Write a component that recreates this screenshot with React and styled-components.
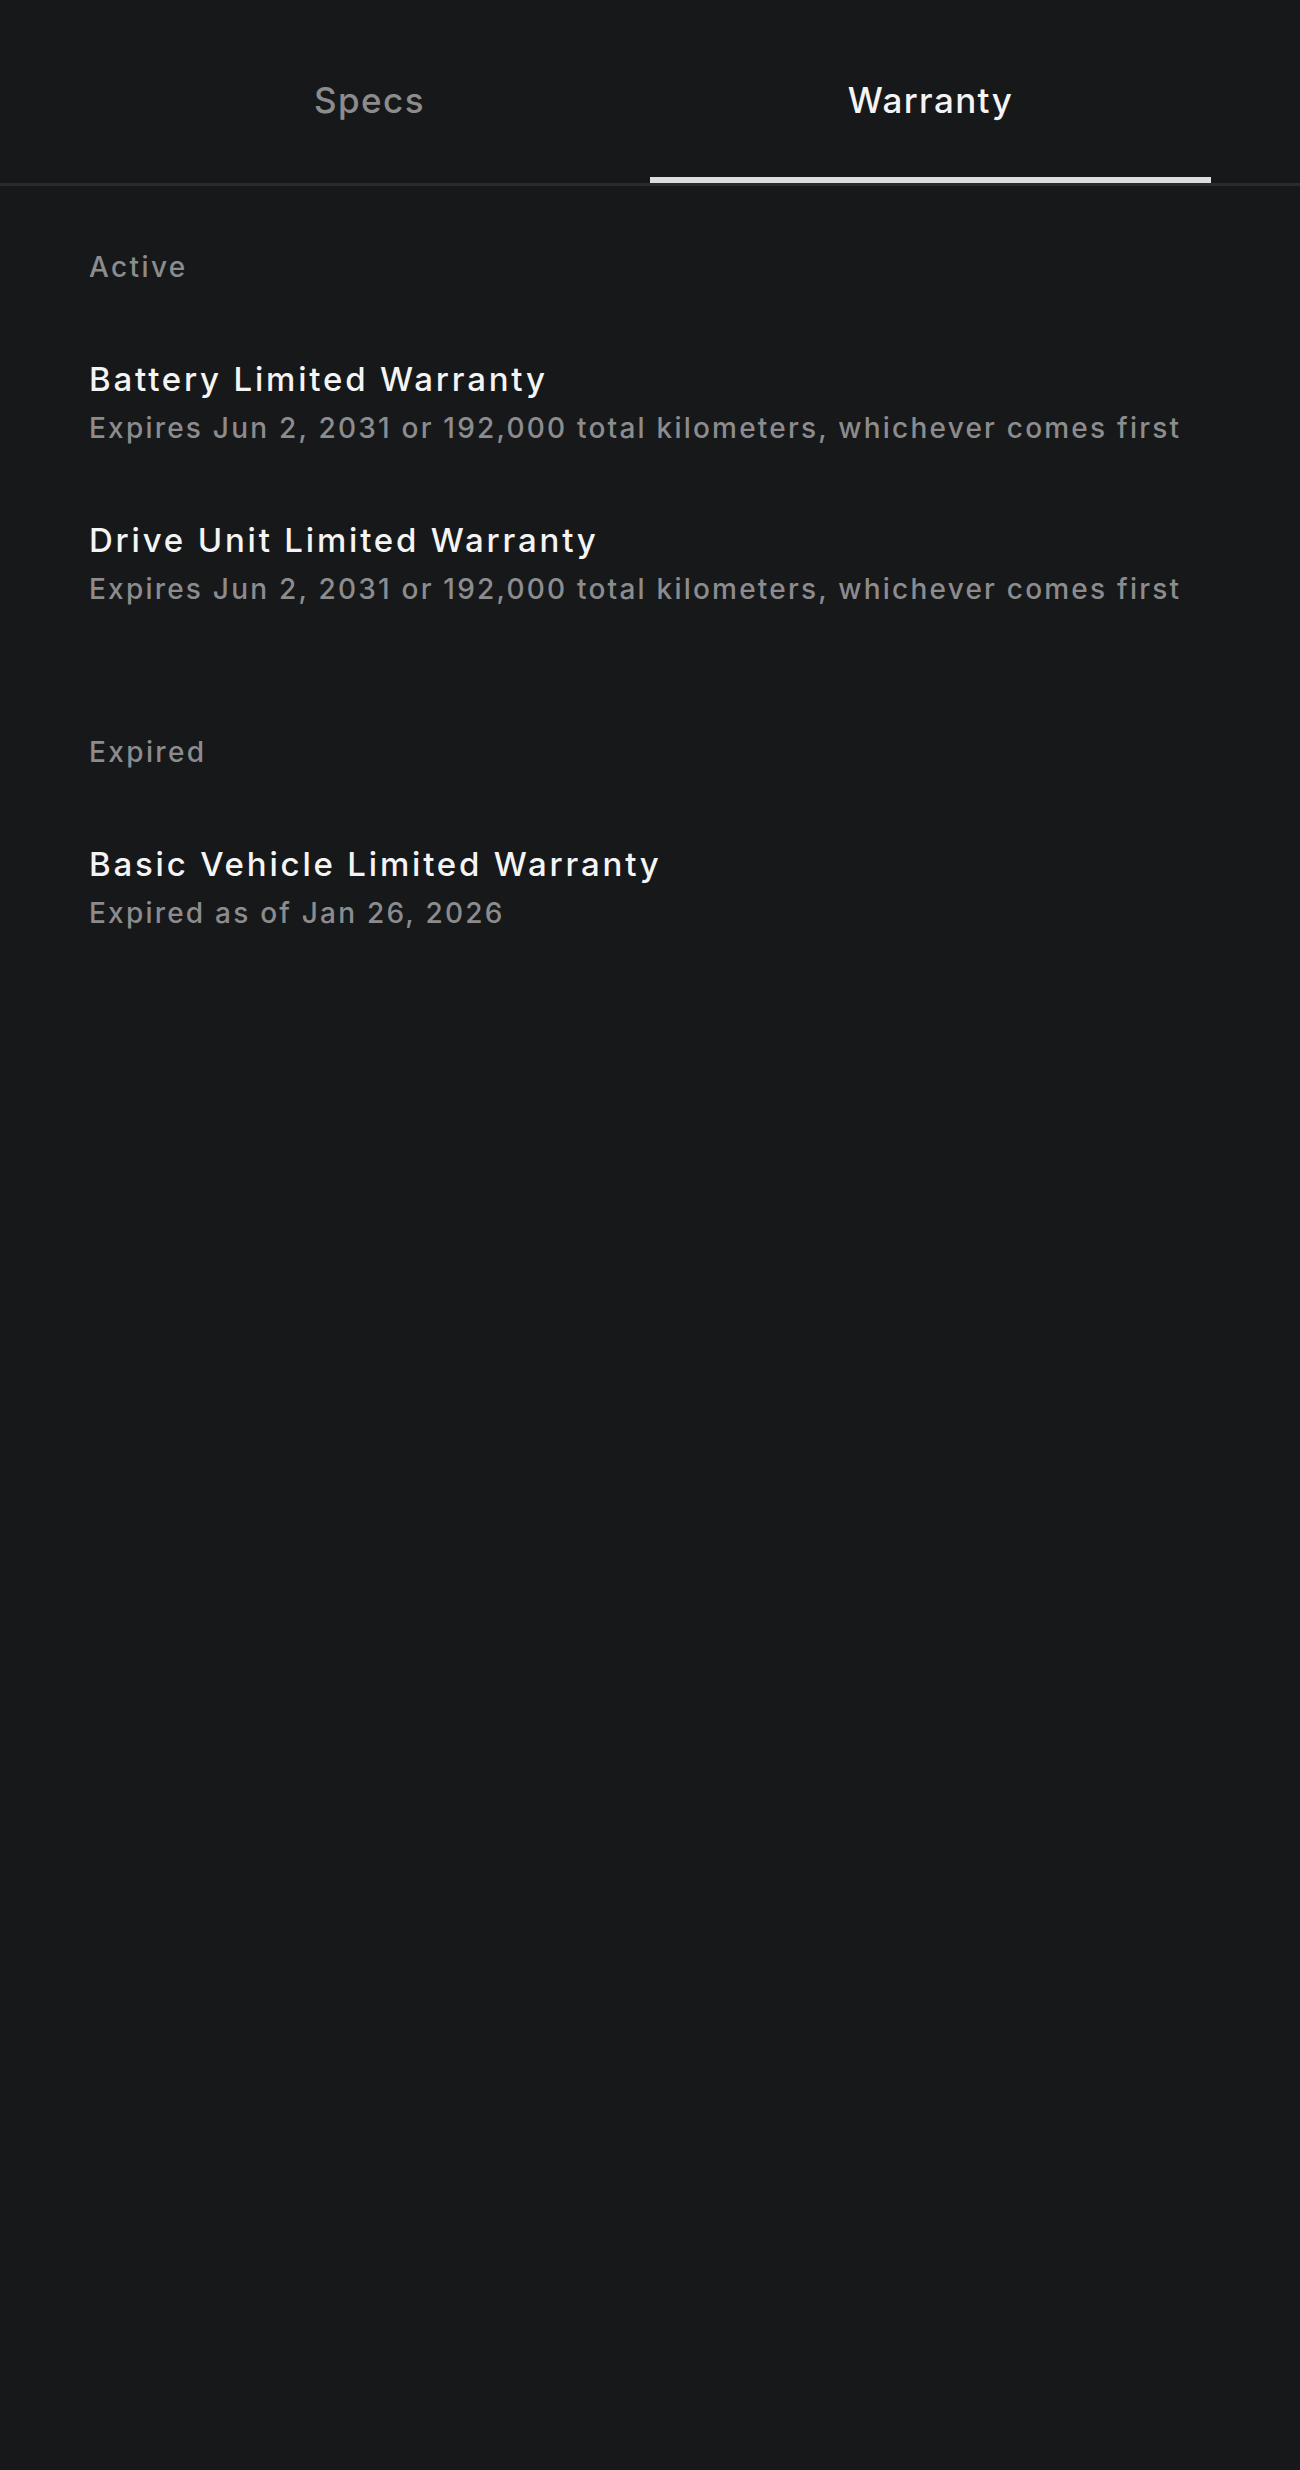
import { useState } from "react";
import styled, { createGlobalStyle } from "styled-components";

const GlobalStyle = createGlobalStyle`
  html, body {
    margin: 0;
    padding: 0;
    background: #17181a;
  }
  body {
    font-family: Inter, "Noto Sans", "Liberation Sans", sans-serif;
    -webkit-font-smoothing: antialiased;
  }
`;

const Page = styled.div`
  min-height: 2470px;
  background: #17181a;
  color: #f4f4f4;
`;

const TabBar = styled.div`
  display: flex;
  padding: 0 89px;
  border-bottom: 3px solid #2a2b2d;
`;

const Tab = styled.div`
  flex: 1;
  height: 183px;
  box-sizing: border-box;
  padding-top: 79px;
  border-bottom: 6px solid ${(p) => (p.$active ? "#dcdddf" : "transparent")};
  font-size: 35px;
  line-height: 42px;
  font-weight: 500;
  letter-spacing: 0.04em;
  color: ${(p) => (p.$active ? "#f4f4f4" : "#8c8c8e")};
  text-align: center;
  cursor: pointer;
  user-select: none;
`;

const Content = styled.div`
  display: flex;
  flex-direction: column;
  gap: 129px;
  padding: 64px 89px;
`;

const Section = styled.section`
  display: flex;
  flex-direction: column;
`;

const SectionLabel = styled.div`
  font-size: 28px;
  line-height: 34px;
  font-weight: 500;
  letter-spacing: 0.085em;
  color: #8c8c8e;
`;

const List = styled.div`
  display: flex;
  flex-direction: column;
  gap: 75px;
  margin-top: 75px;
`;

const Item = styled.div`
  display: flex;
  flex-direction: column;
  gap: 12px;
`;

const Title = styled.div`
  font-size: 33px;
  line-height: 40px;
  font-weight: 500;
  letter-spacing: 0.085em;
  color: #f4f4f4;
`;

const Detail = styled.div`
  font-size: 28px;
  line-height: 34px;
  font-weight: 500;
  letter-spacing: 0.079em;
  color: #8c8c8e;
`;

const sections = [
  {
    label: "Active",
    items: [
      {
        title: "Battery Limited Warranty",
        detail:
          "Expires Jun 2, 2031 or 192,000 total kilometers, whichever comes first",
      },
      {
        title: "Drive Unit Limited Warranty",
        detail:
          "Expires Jun 2, 2031 or 192,000 total kilometers, whichever comes first",
      },
    ],
  },
  {
    label: "Expired",
    items: [
      {
        title: "Basic Vehicle Limited Warranty",
        detail: "Expired as of Jan 26, 2026",
      },
    ],
  },
];

const App = () => {
  const [tab, setTab] = useState("warranty");

  return (
    <Page>
      <GlobalStyle />
      <TabBar>
        <Tab $active={tab === "specs"} onClick={() => setTab("specs")}>
          Specs
        </Tab>
        <Tab $active={tab === "warranty"} onClick={() => setTab("warranty")}>
          Warranty
        </Tab>
      </TabBar>
      {tab === "warranty" && (
        <Content>
          {sections.map((section) => (
            <Section key={section.label}>
              <SectionLabel>{section.label}</SectionLabel>
              <List>
                {section.items.map((item) => (
                  <Item key={item.title}>
                    <Title>{item.title}</Title>
                    <Detail>{item.detail}</Detail>
                  </Item>
                ))}
              </List>
            </Section>
          ))}
        </Content>
      )}
    </Page>
  );
};

export default App;
